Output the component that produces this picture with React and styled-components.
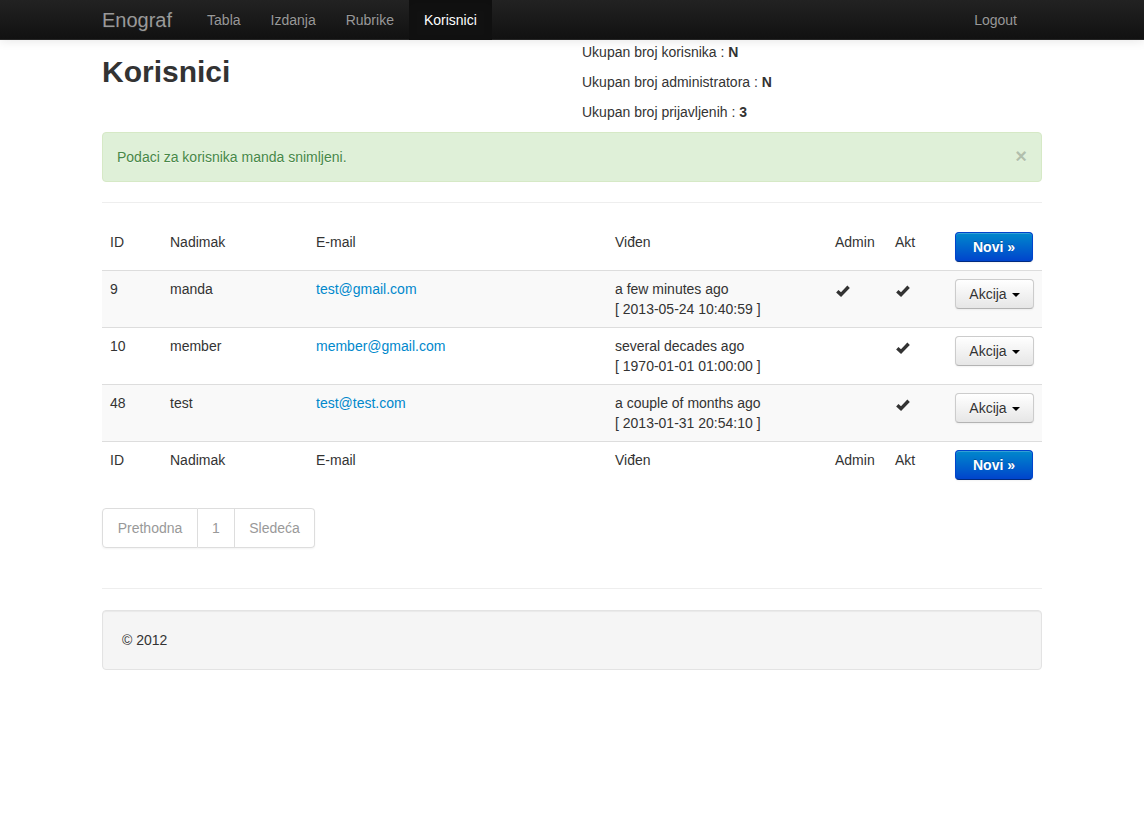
import React from "react";
import styled, { createGlobalStyle } from "styled-components";

const GlobalStyle = createGlobalStyle`
  html, body {
    margin: 0;
    padding: 0;
    background: #fff;
  }
  body {
    font-family: "Liberation Sans", Arial, Helvetica, sans-serif;
    font-size: 14px;
    line-height: 20px;
    color: #333;
  }
  * {
    box-sizing: border-box;
  }
`;

const Navbar = styled.div`
  height: 40px;
  background-image: linear-gradient(to bottom, #222222, #111111);
  border-bottom: 1px solid #252525;
  box-shadow: 0 1px 10px rgba(0, 0, 0, 0.1);
`;

const NavInner = styled.div`
  width: 940px;
  margin: 0 auto;
  display: flex;
  align-items: stretch;
  height: 40px;
`;

const Brand = styled.a`
  display: block;
  padding: 10px 20px;
  margin-left: -20px;
  font-size: 20px;
  font-weight: 200;
  color: #999;
  text-decoration: none;
  text-shadow: 0 1px 0 #222;
  line-height: 20px;
`;

const Nav = styled.ul`
  display: flex;
  list-style: none;
  margin: 0 ${(p) => (p.$right ? "10px" : "0")} 0 ${(p) => (p.$right ? "auto" : "0")};
  padding: 0;
`;

const NavLink = styled.a`
  display: block;
  padding: 10px 15px;
  line-height: 20px;
  color: ${(p) => (p.$active ? "#fff" : "#999")};
  background: ${(p) => (p.$active ? "#111" : "transparent")};
  box-shadow: ${(p) => (p.$active ? "inset 0 3px 8px rgba(0,0,0,0.125)" : "none")};
  text-decoration: none;
  text-shadow: 0 -1px 0 rgba(0, 0, 0, 0.25);
`;

const Container = styled.div`
  width: 940px;
  margin: 0 auto;
  padding-top: 2px;
`;

const HeaderRow = styled.div`
  display: grid;
  grid-template-columns: 460px 460px;
  column-gap: 20px;
`;

const Title = styled.h1`
  margin: 10px 0;
  font-size: 30px;
  line-height: 40px;
  font-weight: bold;
  color: #333;
`;

const Stat = styled.p`
  margin: 0 0 10px;
`;

const Alert = styled.div`
  position: relative;
  padding: 14px 35px 14px 14px;
  margin-bottom: 20px;
  background: #dff0d8;
  border: 1px solid #d6e9c6;
  border-radius: 4px;
  color: #468847;
  text-shadow: 0 1px 0 rgba(255, 255, 255, 0.5);
`;

const Close = styled.span`
  position: absolute;
  right: 14px;
  top: 13px;
  font-size: 20px;
  font-weight: bold;
  line-height: 20px;
  color: #000;
  opacity: 0.2;
  text-shadow: 0 1px 0 #fff;
  cursor: pointer;
`;

const Hr = styled.hr`
  margin: 20px 0;
  border: 0;
  border-top: 1px solid #eeeeee;
  border-bottom: 1px solid #ffffff;
`;

const Table = styled.table`
  width: 100%;
  border-collapse: collapse;
  margin-bottom: 20px;
`;

const Row = styled.tr`
  background: ${(p) => (p.$striped ? "#f9f9f9" : "transparent")};
`;

const Cell = styled.td`
  padding: 8px;
  line-height: 20px;
  text-align: left;
  vertical-align: top;
  font-weight: normal;
  border-top: ${(p) => (p.$noBorder ? "0" : "1px solid #dddddd")};
  width: ${(p) => p.$w || "auto"};
`;

const Link = styled.a`
  color: #0088cc;
  text-decoration: none;
`;

const Button = styled.button`
  display: inline-flex;
  align-items: center;
  justify-content: center;
  gap: 5px;
  height: 30px;
  padding: 4px 12px;
  font-family: inherit;
  font-size: 14px;
  line-height: 20px;
  border-radius: 4px;
  cursor: pointer;
  width: ${(p) => p.$w};
  ${(p) =>
    p.$primary
      ? `
    color: #fff;
    font-weight: bold;
    text-shadow: 0 -1px 0 rgba(0,0,0,0.25);
    background-image: linear-gradient(to bottom, #0088cc, #0044cc);
    border: 1px solid #0044cc;
    border-bottom-color: #002a80;
    box-shadow: inset 0 1px 0 rgba(255,255,255,0.2), 0 1px 2px rgba(0,0,0,0.05);
  `
      : `
    color: #333;
    text-shadow: 0 1px 1px rgba(255,255,255,0.75);
    background-image: linear-gradient(to bottom, #ffffff, #e6e6e6);
    border: 1px solid #cccccc;
    border-bottom-color: #b3b3b3;
    box-shadow: inset 0 1px 0 rgba(255,255,255,0.2), 0 1px 2px rgba(0,0,0,0.05);
  `}
`;

const Caret = styled.span`
  display: inline-block;
  width: 0;
  height: 0;
  border-top: 4px solid #000;
  border-left: 4px solid transparent;
  border-right: 4px solid transparent;
  margin-top: 2px;
`;

const PaginationWrap = styled.div`
  margin: 20px 0 40px;
`;

const Pagination = styled.ul`
  display: inline-flex;
  list-style: none;
  margin: 0;
  padding: 0;
  border-radius: 4px;
  box-shadow: 0 1px 2px rgba(0, 0, 0, 0.05);
`;

const PageItem = styled.li`
  padding: 9px 14px;
  line-height: 20px;
  color: #999;
  background: #fff;
  border: 1px solid #dddddd;
  border-left-width: ${(p) => (p.$first ? "1px" : "0")};
  border-radius: ${(p) => (p.$first ? "4px 0 0 4px" : p.$last ? "0 4px 4px 0" : "0")};
  min-width: ${(p) => p.$min || "0"};
  text-align: center;
`;

const Well = styled.div`
  padding: 19px;
  margin-bottom: 20px;
  background: #f5f5f5;
  border: 1px solid #e3e3e3;
  border-radius: 4px;
  box-shadow: inset 0 1px 1px rgba(0, 0, 0, 0.05);
`;

const Check = () => (
  <svg width="14" height="12" viewBox="0 0 14 12" style={{ display: "block", marginTop: 6, marginLeft: 1 }}>
    <path d="M1.3 6.2 L5 9.6 L12.6 1.8" fill="none" stroke="#333" strokeWidth="3.4" strokeLinejoin="miter" />
  </svg>
);

const users = [
  { id: 9, nick: "manda", email: "test@gmail.com", ago: "a few minutes ago", date: "2013-05-24 10:40:59", admin: true, akt: true },
  { id: 10, nick: "member", email: "member@gmail.com", ago: "several decades ago", date: "1970-01-01 01:00:00", admin: false, akt: true },
  { id: 48, nick: "test", email: "test@test.com", ago: "a couple of months ago", date: "2013-01-31 20:54:10", admin: false, akt: true },
];

const HeadRow = ({ noBorder }) => (
  <Row>
    <Cell $noBorder={noBorder} $w="60px">ID</Cell>
    <Cell $noBorder={noBorder} $w="146px">Nadimak</Cell>
    <Cell $noBorder={noBorder} $w="299px">E-mail</Cell>
    <Cell $noBorder={noBorder} $w="220px">Viđen</Cell>
    <Cell $noBorder={noBorder} $w="60px">Admin</Cell>
    <Cell $noBorder={noBorder} $w="60px">Akt</Cell>
    <Cell $noBorder={noBorder}>
      <Button $primary $w="78px">Novi »</Button>
    </Cell>
  </Row>
);

const App = () => {
  return (
    <>
      <GlobalStyle />
      <Navbar>
        <NavInner>
          <Brand href="#">Enograf</Brand>
          <Nav>
            <li><NavLink href="#">Tabla</NavLink></li>
            <li><NavLink href="#">Izdanja</NavLink></li>
            <li><NavLink href="#">Rubrike</NavLink></li>
            <li><NavLink href="#" $active>Korisnici</NavLink></li>
          </Nav>
          <Nav $right>
            <li><NavLink href="#">Logout</NavLink></li>
          </Nav>
        </NavInner>
      </Navbar>
      <Container>
        <HeaderRow>
          <div>
            <Title>Korisnici</Title>
          </div>
          <div>
            <Stat>Ukupan broj korisnika : <b>N</b></Stat>
            <Stat>Ukupan broj administratora : <b>N</b></Stat>
            <Stat>Ukupan broj prijavljenih : <b>3</b></Stat>
          </div>
        </HeaderRow>
        <Alert>
          Podaci za korisnika manda snimljeni.
          <Close>×</Close>
        </Alert>
        <Hr />
        <Table>
          <thead>
            <HeadRow noBorder />
          </thead>
          <tbody>
            {users.map((u, i) => (
              <Row key={u.id} $striped={i % 2 === 0}>
                <Cell>{u.id}</Cell>
                <Cell>{u.nick}</Cell>
                <Cell><Link href="#">{u.email}</Link></Cell>
                <Cell>
                  {u.ago}
                  <br />[ {u.date} ]
                </Cell>
                <Cell>{u.admin && <Check />}</Cell>
                <Cell>{u.akt && <Check />}</Cell>
                <Cell>
                  <Button $w="79px">Akcija <Caret /></Button>
                </Cell>
              </Row>
            ))}
          </tbody>
          <tfoot>
            <HeadRow />
          </tfoot>
        </Table>
        <PaginationWrap>
          <Pagination>
            <PageItem $first $min="96px">Prethodna</PageItem>
            <PageItem $min="37px">1</PageItem>
            <PageItem $last $min="80px">Sledeća</PageItem>
          </Pagination>
        </PaginationWrap>
        <Hr />
        <Well>© 2012</Well>
      </Container>
    </>
  );
};

export default App;
